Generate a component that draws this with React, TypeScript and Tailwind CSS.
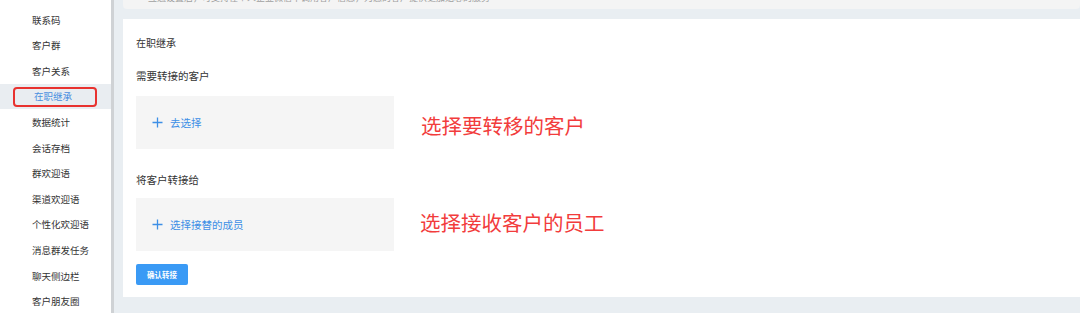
import React from "react";

const menu = [
  "联系码",
  "客户群",
  "客户关系",
  "在职继承",
  "数据统计",
  "会话存档",
  "群欢迎语",
  "渠道欢迎语",
  "个性化欢迎语",
  "消息群发任务",
  "聊天侧边栏",
  "客户朋友圈",
];

function Plus() {
  return (
    <svg width="11" height="11" viewBox="0 0 11 11" className="shrink-0">
      <path d="M5.5 0.5V10.5M0.5 5.5H10.5" stroke="#3d8fe6" strokeWidth="1.3" fill="none" />
    </svg>
  );
}

export default function App() {
  return (
    <div
      className="flex h-[313px] w-[1080px] overflow-hidden bg-[#e9eef2]"
      style={{ fontFamily: '"Noto Sans CJK SC", "Noto Sans", sans-serif' }}
    >
      <aside className="w-[111px] shrink-0 bg-white pt-[7px]">
        {menu.map((m) => {
          const active = m === "在职继承";
          return (
            <div
              key={m}
              className={
                active
                  ? "flex h-[25.6px] items-center bg-[#e9edf1] pl-[13px]"
                  : "flex h-[25.6px] items-center pl-[32px] text-[9.5px] text-[#333]"
              }
            >
              {active ? (
                <div className="flex h-[20px] w-[84px] items-center rounded-[4px] border-2 border-[#e8322f] pl-[19px] text-[9.5px] text-[#4a8fe0]">
                  {m}
                </div>
              ) : (
                m
              )}
            </div>
          );
        })}
      </aside>
      <div className="w-[3px] shrink-0 bg-[#cfd2d5]" />
      <main className="flex flex-1 flex-col pl-[9px]">
        <div className="-mt-[10px] h-[19px] rounded-b-[4px] bg-[#f4f4f4] pl-[25px] pt-[1.5px] text-[9px] leading-[12px] text-[#a0a0a0]">
          互通设置后，可支持在个人企业微信中调用客户信息，为您的客户提供更加贴心的服务
        </div>
        <div className="mt-[10px] h-[278px] bg-white px-[13px] pt-[17px] text-[#333]">
          <div className="text-[10px] leading-[14px]">在职继承</div>
          <div className="mt-[19px] text-[10.5px] leading-[14px]">需要转接的客户</div>
          <div className="mt-[13px] flex items-center">
            <div className="flex h-[53px] w-[258px] items-center gap-[7px] bg-[#f5f5f5] pl-[16px]">
              <Plus />
              <span className="text-[10.5px] text-[#3d8fe6]">去选择</span>
            </div>
            <div className="ml-[27px] mt-[5px] text-[20.5px] leading-[24px] text-[#f23c3c]">
              选择要转移的客户
            </div>
          </div>
          <div className="mt-[24px] text-[10.5px] leading-[14px]">将客户转接给</div>
          <div className="mt-[11px] flex items-center">
            <div className="flex h-[53px] w-[258px] items-center gap-[7px] bg-[#f5f5f5] pl-[16px]">
              <Plus />
              <span className="text-[10.5px] text-[#3d8fe6]">选择接替的成员</span>
            </div>
            <div className="ml-[26px] -mt-[6px] text-[20.5px] leading-[24px] text-[#f23c3c]">
              选择接收客户的员工
            </div>
          </div>
          <button className="mt-[13px] flex h-[21px] w-[52px] items-center justify-center rounded-[2px] bg-[#3a9af5] text-[7.5px] font-bold text-white">
            确认转接
          </button>
        </div>
      </main>
    </div>
  );
}
